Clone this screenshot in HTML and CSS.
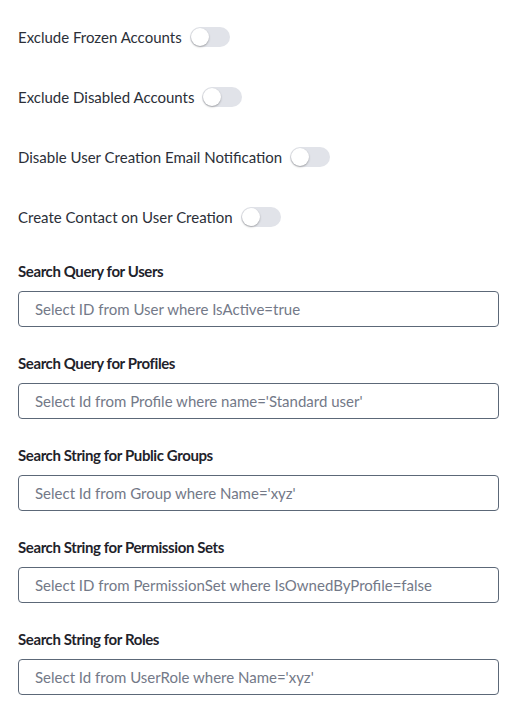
FILE: index.html
```html
<!DOCTYPE html>
<html>
<head>
<meta charset="utf-8">
<link rel="stylesheet" href="styles.css">
</head>
<body>
<div class="page">
  <div class="toggles">
    <div class="toggle-row"><span class="toggle-label">Exclude Frozen Accounts</span><span class="switch"><span class="knob"></span></span></div>
    <div class="toggle-row"><span class="toggle-label">Exclude Disabled Accounts</span><span class="switch"><span class="knob"></span></span></div>
    <div class="toggle-row"><span class="toggle-label">Disable User Creation Email Notification</span><span class="switch"><span class="knob"></span></span></div>
    <div class="toggle-row"><span class="toggle-label">Create Contact on User Creation</span><span class="switch"><span class="knob"></span></span></div>
  </div>
  <div class="fields">
    <div class="field">
      <label class="field-label">Search Query for Users</label>
      <input class="field-input" type="text" placeholder="Select ID from User where IsActive=true">
    </div>
    <div class="field">
      <label class="field-label">Search Query for Profiles</label>
      <input class="field-input" type="text" placeholder="Select Id from Profile where name='Standard user'">
    </div>
    <div class="field">
      <label class="field-label">Search String for Public Groups</label>
      <input class="field-input" type="text" placeholder="Select Id from Group where Name='xyz'">
    </div>
    <div class="field">
      <label class="field-label">Search String for Permission Sets</label>
      <input class="field-input" type="text" placeholder="Select ID from PermissionSet where IsOwnedByProfile=false">
    </div>
    <div class="field">
      <label class="field-label">Search String for Roles</label>
      <input class="field-input" type="text" placeholder="Select Id from UserRole where Name='xyz'">
    </div>
  </div>
</div>
</body>
</html>
```

FILE: styles.css
```css
html, body {
  margin: 0;
  padding: 0;
  background: #ffffff;
}
body {
  font-family: "Lato", "Noto Sans", sans-serif;
  font-size: 15px;
  color: #2b2f38;
}
.page {
  padding: 27px 19px 0 18px;
}
.toggles {
  display: flex;
  flex-direction: column;
  gap: 40px;
}
.toggle-row {
  display: flex;
  align-items: center;
  gap: 8px;
  height: 20px;
}
.toggle-label {
  line-height: 20px;
}
.switch {
  position: relative;
  width: 40px;
  height: 20px;
  border-radius: 10px;
  background: #e1e3e9;
  flex: none;
}
.knob {
  position: absolute;
  left: 1px;
  top: 1px;
  width: 18px;
  height: 18px;
  border-radius: 50%;
  background: #ffffff;
  box-shadow: 0 1px 2px rgba(0,0,0,0.3);
}
.fields {
  margin-top: 34px;
  display: flex;
  flex-direction: column;
  gap: 26px;
}
.field {
  display: flex;
  flex-direction: column;
  gap: 10px;
}
.field-label {
  font-weight: 700;
  line-height: 20px;
  letter-spacing: -0.4px;
  color: #1f232b;
}
.field-input {
  box-sizing: border-box;
  height: 36px;
  width: 100%;
  border: 1px solid #5c6878;
  border-radius: 4px;
  padding: 0 16px;
  font-family: inherit;
  font-size: 15px;
  color: #2b2f38;
  outline: none;
}
.field-input::placeholder {
  color: #737988;
}
```
